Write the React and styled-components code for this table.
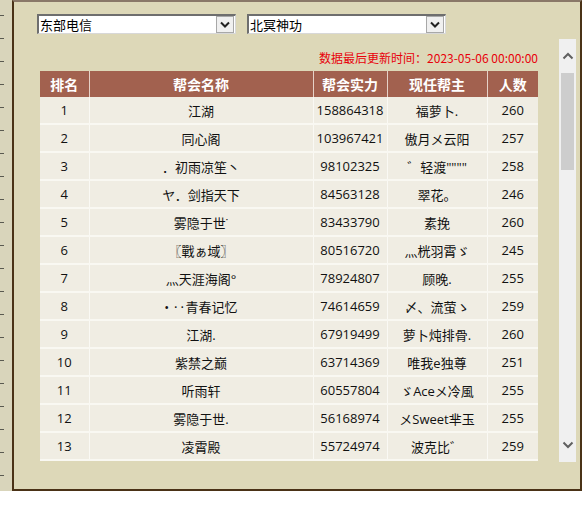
import React from 'react'
import styled, { createGlobalStyle } from 'styled-components'

const GlobalStyle = createGlobalStyle`
  html, body {
    margin: 0;
    padding: 0;
    background: #fff;
    font-family: "Open Sans", "Noto Sans CJK SC", sans-serif;
  }
`

const arrowBox = encodeURIComponent(
  `<svg xmlns='http://www.w3.org/2000/svg' width='18' height='17'><rect x='0.5' y='0.5' width='17' height='16' fill='#f0f0f0' stroke='#a8a8a8'/><path d='M5 6.5l4 4 4-4' fill='none' stroke='#222' stroke-width='2'/></svg>`
)

const Page = styled.div`
  display: flex;
  width: 586px;
  height: 519px;
  background: #fff;
  align-items: flex-start;
`
const SideStrip = styled.div`
  width: 12px;
  height: 491px;
  background: #d9d5bb;
  display: flex;
  flex-direction: column;
  gap: 22px;
  padding-top: 15px;
  box-sizing: border-box;
  overflow: hidden;
`
const Tick = styled.span`
  display: block;
  width: 4px;
  height: 1px;
  flex: none;
  background: #5a5a50;
`
const Panel = styled.div`
  width: 570px;
  height: 491px;
  box-sizing: border-box;
  background: #ddd8b8;
  border: 2px solid #4a3216;
  border-top: 2px solid #8a7868;
  padding: 12px 4px 0 23px;
  display: flex;
  flex-direction: column;
`
const Filters = styled.div`
  display: flex;
  gap: 11px;
`
const Select = styled.select`
  appearance: none;
  width: 199px;
  height: 20px;
  box-sizing: border-box;
  border-style: solid;
  border-width: 2px 1px 1px 2px;
  border-color: #6e6e6e #d8d8d8 #d8d8d8 #6e6e6e;
  border-radius: 0;
  background: #fff url("data:image/svg+xml,${arrowBox}") no-repeat right 1px center;
  padding: 0 20px 0 1px;
  font-family: "Noto Sans CJK SC", sans-serif;
  font-size: 13px;
  line-height: 16px;
  color: #000;
  outline: none;
`
const Scroller = styled.div`
  margin-top: 5px;
  height: 423px;
  display: flex;
`
const Viewport = styled.div`
  flex: 1;
  overflow: hidden;
  padding: 0 21px 0 3px;
`
const ScrollBar = styled.div`
  width: 17px;
  flex: none;
  background: #f0f0f0;
  display: flex;
  flex-direction: column;
`
const ScrollButton = styled.div`
  height: 34px;
  flex: none;
  display: flex;
  align-items: center;
  justify-content: center;
`
const Track = styled.div`
  flex: 1;
  padding: 0 2px;
`
const Thumb = styled.div`
  height: 97px;
  background: #cdcdcd;
`
const Updated = styled.div`
  text-align: right;
  color: #e8000a;
  font-family: "Noto Sans CJK SC", sans-serif;
  font-size: 12px;
  line-height: 16px;
  padding: 11px 0 5px;
`
const Table = styled.table`
  width: 498px;
  border-collapse: collapse;
  table-layout: fixed;
`
const Th = styled.th`
  height: 26px;
  padding: 0;
  background: #a2614f;
  color: #fff;
  font-family: "Noto Sans CJK SC", sans-serif;
  font-size: 14px;
  font-weight: bold;
  text-align: center;
  border-left: 1px solid #e6d2c8;
  &:first-child {
    border-left: none;
  }
`
const Td = styled.td`
  height: 26px;
  padding: 0;
  background: #f0ede3;
  color: #111;
  font-size: 13px;
  text-align: center;
  white-space: nowrap;
  border-bottom: 2px solid #f9f8f2;
  border-left: 1px solid #faf9f4;
  &:first-child {
    border-left: none;
  }
`
const Col = styled.col`
  width: ${p => p.$w}px;
`

const Chevron = ({ up }) => (
  <svg width="12" height="8" viewBox="0 0 12 8">
    <path
      d={up ? 'M1.5 6.5L6 2l4.5 4.5' : 'M1.5 1.5L6 6l4.5-4.5'}
      fill="none"
      stroke="#606060"
      strokeWidth="2"
    />
  </svg>
)

const columns = [
  { label: '排名', w: 49 },
  { label: '帮会名称', w: 224 },
  { label: '帮会实力', w: 74 },
  { label: '现任帮主', w: 100 },
  { label: '人数', w: 51 },
]

const rows = [
  ['江湖', 158864318, '福萝卜.', 260],
  ['同心阁', 103967421, '傲月メ云阳', 257],
  ['．初雨凉笙丶', 98102325, '゛轻渡""""', 258],
  ['ヤ．剑指天下', 84563128, '翠花。', 246],
  ['雾隐于世˙', 83433790, '素挽', 260],
  ['〖戰ぁ域〗', 80516720, '灬桄羽霄ゞ', 245],
  ['灬天涯海阁°', 78924807, '顾晚.', 255],
  ['• ‥青春记忆', 74614659, '〆、流萤ゝ', 259],
  ['江湖.', 67919499, '萝卜炖排骨.', 260],
  ['紫禁之巅', 63714369, '唯我e独尊', 251],
  ['听雨轩', 60557804, 'ゞAceメ冷風', 255],
  ['雾隐于世.', 56168974, 'メSweet芈玉', 255],
  ['凌霄殿', 55724974, '波克比゛', 259],
]

function App() {
  return (
    <Page>
      <GlobalStyle />
      <SideStrip>
        {Array.from({ length: 21 }, (_, i) => <Tick key={i} />)}
      </SideStrip>
      <Panel>
        <Filters>
          <Select defaultValue='东部电信'>
            <option>东部电信</option>
            <option>西部电信</option>
          </Select>
          <Select defaultValue='北冥神功'>
            <option>北冥神功</option>
          </Select>
        </Filters>
        <Scroller>
          <Viewport>
            <Updated>数据最后更新时间：2023-05-06 00:00:00</Updated>
            <Table>
              <colgroup>
                {columns.map(c => <Col key={c.label} $w={c.w} />)}
              </colgroup>
              <thead>
                <tr>
                  {columns.map(c => <Th key={c.label}>{c.label}</Th>)}
                </tr>
              </thead>
              <tbody>
                {rows.map((r, i) => (
                  <tr key={i}>
                    <Td>{i + 1}</Td>
                    <Td>{r[0]}</Td>
                    <Td>{r[1]}</Td>
                    <Td>{r[2]}</Td>
                    <Td>{r[3]}</Td>
                  </tr>
                ))}
              </tbody>
            </Table>
          </Viewport>
          <ScrollBar>
            <ScrollButton><Chevron up /></ScrollButton>
            <Track><Thumb /></Track>
            <ScrollButton><Chevron /></ScrollButton>
          </ScrollBar>
        </Scroller>
      </Panel>
    </Page>
  )
}

export default App
